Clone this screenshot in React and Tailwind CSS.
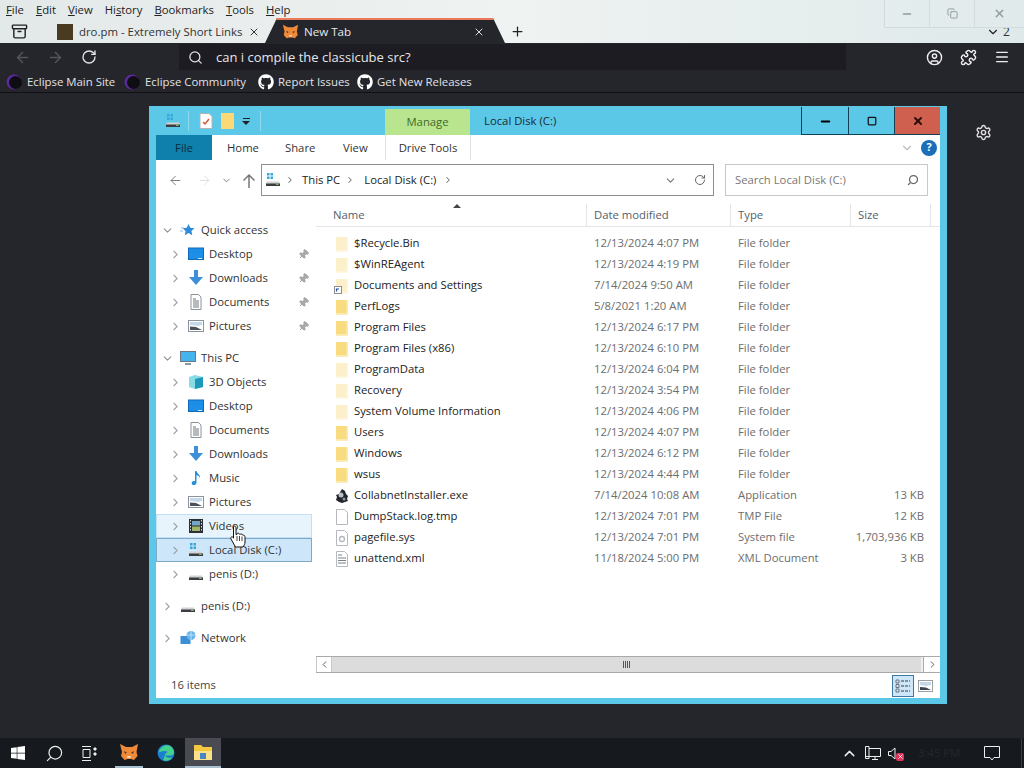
import React from 'react';
import { ArrowLeft, ArrowRight, RotateCw, Search, CircleUser, Puzzle, Menu, Settings, X, Plus, ChevronDown, ChevronRight, ChevronUp, Minus, Pin, Copy, Square, Archive } from 'lucide-react';
import { FaGithub, FaWindows } from 'react-icons/fa';

const quickAccess = [
  ['Desktop', 'desktop'],
  ['Downloads', 'downloads'],
  ['Documents', 'documents'],
  ['Pictures', 'pictures'],
];

const pcItems = [
  ['3D Objects', 'cube'],
  ['Desktop', 'desktop'],
  ['Documents', 'documents'],
  ['Downloads', 'downloads'],
  ['Music', 'music'],
  ['Pictures', 'pictures'],
  ['Videos', 'videos', 'hover'],
  ['Local Disk (C:)', 'drivec', 'selected'],
  ['penis (D:)', 'drive'],
];

const files = [
  ['$Recycle.Bin', '12/13/2024 4:07 PM', 'File folder', '', 'hidden'],
  ['$WinREAgent', '12/13/2024 4:19 PM', 'File folder', '', 'hidden'],
  ['Documents and Settings', '7/14/2024 9:50 AM', 'File folder', '', 'link'],
  ['PerfLogs', '5/8/2021 1:20 AM', 'File folder', '', 'folder'],
  ['Program Files', '12/13/2024 6:17 PM', 'File folder', '', 'folder'],
  ['Program Files (x86)', '12/13/2024 6:10 PM', 'File folder', '', 'folder'],
  ['ProgramData', '12/13/2024 6:04 PM', 'File folder', '', 'hidden'],
  ['Recovery', '12/13/2024 3:54 PM', 'File folder', '', 'hidden'],
  ['System Volume Information', '12/13/2024 4:06 PM', 'File folder', '', 'hidden'],
  ['Users', '12/13/2024 4:07 PM', 'File folder', '', 'folder'],
  ['Windows', '12/13/2024 6:12 PM', 'File folder', '', 'folder'],
  ['wsus', '12/13/2024 4:44 PM', 'File folder', '', 'folder'],
  ['CollabnetInstaller.exe', '7/14/2024 10:08 AM', 'Application', '13 KB', 'exe'],
  ['DumpStack.log.tmp', '12/13/2024 7:01 PM', 'TMP File', '12 KB', 'blank'],
  ['pagefile.sys', '12/13/2024 7:01 PM', 'System file', '1,703,936 KB', 'sys'],
  ['unattend.xml', '11/18/2024 5:00 PM', 'XML Document', '3 KB', 'xml'],
];

const FileIcon = ({ kind }) => {
  if (kind === 'hidden' || kind === 'folder' || kind === 'link') {
    const fill = kind === 'folder' ? '#f9dc80' : '#fbf0c9';
    const pale = kind === 'folder' ? '#fcebb0' : '#fdf6dc';
    return (
      <svg width="16" height="16" viewBox="0 0 16 16">
        <path d="M2 1h12v14.500H2z" fill={fill} />
        <path d="M12.500 1H14v14.500H2V14h10.500z" fill={pale} />
        {kind === 'link' && <rect x="0.500" y="8.500" width="7" height="7" fill="#fff" stroke="#8a8f98" />}
        {kind === 'link' && <path d="M2.500 13.500V11h2.500" fill="none" stroke="#1e4f9c" strokeWidth="1.200" />}
      </svg>
    );
  }
  if (kind === 'exe') {
    return (
      <svg width="16" height="16" viewBox="0 0 16 16">
        <path d="M8 1l3 2 1 3 2 2-1 3 1 2-3 1-3 1-3-1-3-2 1-3-1-2 3-1z" fill="#23262b" />
        <circle cx="7" cy="7" r="2.500" fill="#b8c2cc" />
        <circle cx="10" cy="11" r="1.500" fill="#8d98a3" />
      </svg>
    );
  }
  return (
    <svg width="16" height="16" viewBox="0 0 16 16">
      <path d="M2.500 .500h8l3 3v12h-11z" fill="#fff" stroke="#b5b9bf" />
      {kind === 'sys' && <circle cx="8" cy="9" r="2.500" fill="none" stroke="#b4b8be" strokeWidth="1.300" />}
      {kind === 'xml' && <path d="M4 4h4M4 7h8M4 9.500h8M4 12h8" stroke="#79808a" />}
    </svg>
  );
};

const DriveIcon = ({ win }) => (
  <svg width="16" height="16" viewBox="0 0 16 16">
    {win && <path d="M2 1h2.500v2.500H2zM5.500 1H8v2.500H5.500zM2 4.500h2.500V7H2zM5.500 4.500H8V7H5.500z" fill="#35a7d8" />}
    <path d="M2 9.500h12l1 2v2.500H1v-2.500z" fill="#d2d4d6" />
    <path d="M1 11.500h14V14H1z" fill="#3a3d42" />
    <path d="M11 12.300h2.500" stroke="#9ad16d" />
  </svg>
);

const TreeIcon = ({ kind }) => {
  switch (kind) {
    case 'star':
      return (
        <svg width="16" height="16" viewBox="0 0 16 16">
          <path d="M8.500 2l1.800 3.800 4.200.5-3.100 2.800.9 4.100-3.800-2.100-3.700 2.100.8-4.100-3.100-2.800 4.200-.5z" fill="#2f8ad8" />
          <path d="M1 6h3M0 9h3" stroke="#8fc2ea" />
        </svg>
      );
    case 'desktop':
      return (
        <svg width="16" height="16" viewBox="0 0 16 16">
          <rect x="0.500" y="2" width="15" height="11.500" fill="#1b8fe8" stroke="#1268b5" />
          <path d="M10 12.500h4" stroke="#d6ecff" />
        </svg>
      );
    case 'downloads':
      return (
        <svg width="16" height="16" viewBox="0 0 16 16">
          <path d="M6 0h4v7h5l-7 8-7-8h5z" fill="#3d8fd8" />
        </svg>
      );
    case 'documents':
      return (
        <svg width="16" height="16" viewBox="0 0 16 16">
          <path d="M3 .500h7.500l2.500 2.500v12.500H3z" fill="#fff" stroke="#8c929a" />
          <path d="M5 5h3M5 7h6M5 9h6M5 11h6M5 13h6" stroke="#6d7680" />
        </svg>
      );
    case 'pictures':
      return (
        <svg width="16" height="16" viewBox="0 0 16 16">
          <rect x="0.500" y="2.500" width="15" height="11" fill="#fff" stroke="#8c929a" />
          <path d="M2 4h12v3l-4 1-8-1z" fill="#c5d8e8" />
          <path d="M2 12V8.500l6 .5 6 3z" fill="#4a5158" />
        </svg>
      );
    case 'pc':
      return (
        <svg width="16" height="16" viewBox="0 0 16 16">
          <rect x="0.500" y="1.500" width="15" height="10" fill="#45b4ee" stroke="#6d7680" />
          <path d="M5 14h6" stroke="#6d7680" strokeWidth="1.500" />
        </svg>
      );
    case 'cube':
      return (
        <svg width="16" height="16" viewBox="0 0 16 16">
          <path d="M1 3l6-2 8 2v10l-8 2-6-2z" fill="#8adbe8" />
          <path d="M7 5l8-2v10l-8 2z" fill="#1f97b8" />
        </svg>
      );
    case 'music':
      return (
        <svg width="16" height="16" viewBox="0 0 16 16">
          <path d="M7 1h1.500c.5 3 4 3.500 3.500 7-.6-1.800-2-2.500-3.500-2.800V12.500C8.500 14.500 6.500 15.500 5 15s-1.800-2.500-.5-3.500c.8-.6 1.800-.6 2.500-.2z" fill="#2590de" />
        </svg>
      );
    case 'videos':
      return (
        <svg width="16" height="16" viewBox="0 0 16 16">
          <rect x="1" y="1" width="14" height="14" fill="#2c2f33" />
          <rect x="4" y="3" width="8" height="4.500" fill="#74a6c8" />
          <rect x="4" y="8.500" width="8" height="4.500" fill="#a2b56a" />
          <path d="M2.500 2v12M13.500 2v12" stroke="#d5d8db" strokeDasharray="1.500 1.500" />
        </svg>
      );
    case 'drivec':
      return <DriveIcon win />;
    case 'drive':
      return <DriveIcon />;
    case 'network':
      return (
        <svg width="16" height="16" viewBox="0 0 16 16">
          <rect x="0.500" y="6" width="10" height="8" fill="#3a8fd6" />
          <circle cx="11" cy="5.500" r="4.500" fill="#69b5ea" />
          <path d="M7 5h8M11 1v9" stroke="#d6ecff" strokeWidth="0.700" />
        </svg>
      );
    default:
      return null;
  }
};

const TreeRow = ({ label, icon, indent, pinned, state }) => {
  const bg =
    state === 'selected'
      ? 'bg-[#cde6f9] border-[#7fa9c9]'
      : state === 'hover'
        ? 'bg-[#e8f4fc] border-[#c4dff3]'
        : 'border-transparent';
  return (
    <div className={`flex h-[24px] items-center border ${bg}`}>
      <div className={indent ? 'flex w-[31px] justify-end pr-[6px]' : 'flex w-[23px] justify-end pr-[6px]'}>
        <ChevronRight size={13} strokeWidth={2} className="text-[#9fa3a8]" />
      </div>
      <TreeIcon kind={icon} />
      <span className="ml-[5px] text-[11.3px] text-[#333]">{label}</span>
      {pinned && <Pin size={11} className="ml-auto mr-[2px] rotate-45 fill-[#aaa] text-[#9a9a9a]" />}
    </div>
  );
};

const GroupHead = ({ label, icon }) => (
  <div className="flex h-[24px] items-center border border-transparent">
    <div className="flex w-[23px] justify-end pr-[6px]">
      <ChevronDown size={13} strokeWidth={2} className="text-[#8c9096]" />
    </div>
    <TreeIcon kind={icon} />
    <span className="ml-[5px] text-[11.3px] text-[#333]">{label}</span>
  </div>
);

const TopRow = ({ label, icon }) => (
  <div className="flex h-[24px] items-center border border-transparent">
    <div className="flex w-[23px] justify-end pr-[6px]">
      <ChevronRight size={13} strokeWidth={2} className="text-[#9fa3a8]" />
    </div>
    <TreeIcon kind={icon} />
    <span className="ml-[5px] text-[11.3px] text-[#333]">{label}</span>
  </div>
);

const EclipseIcon = () => (
  <svg width="16" height="16" viewBox="0 0 16 16" className="shrink-0">
    <circle cx="8" cy="8" r="7.500" fill="#5b2a9b" />
    <circle cx="9.500" cy="8.500" r="6.500" fill="#0e0d12" />
  </svg>
);

const FoxIcon = ({ size }) => (
  <svg width={size} height={size} viewBox="0 0 20 20">
    <path d="M1 2l6 3h6l6-3-1.500 8 1 4-3.500 4-3-1H8.500l-3 1L2 14l1-4z" fill="#ef8a3a" />
    <path d="M5 9l3 1.500-2 1.500zM15 9l-3 1.500 2 1.500z" fill="#5a3a22" />
    <path d="M8 14h4l-.5 2h-3z" fill="#f9d6ae" />
  </svg>
);

const ArrowUp = () => (
  <svg width="14" height="15" viewBox="0 0 14 15" fill="none" stroke="#777" strokeWidth="1.500" className="ml-[10px] mt-[9px] shrink-0">
    <path d="M7 15V2M1.500 7.500L7 2l5.500 5.500" />
  </svg>
);

function App() {
  return (
    <div className="relative flex h-[768px] w-[1024px] flex-col overflow-hidden bg-[#25252c] font-['Open_Sans',sans-serif]">
      {/* browser chrome */}
      <div className="h-[43px] bg-gradient-to-r from-[#e3e8e8] via-[#eff3f2] to-[#dfe9ea]">
        <div className="flex h-[20px] items-center gap-[12px] pl-[6px] text-[11.3px] text-[#222]">
          <span><u>F</u>ile</span>
          <span><u>E</u>dit</span>
          <span><u>V</u>iew</span>
          <span>Hi<u>s</u>tory</span>
          <span><u>B</u>ookmarks</span>
          <span><u>T</u>ools</span>
          <span><u>H</u>elp</span>
        </div>
        <div className="flex h-[23px] items-center">
          <Archive size={17} className="ml-[11px] text-[#222]" />
          <div className="ml-[29px] h-[16px] w-[16px] bg-[#4a3a22]" />
          <span className="ml-[6px] w-[163px] whitespace-nowrap text-[11.4px] text-[#333]">dro.pm - Extremely Short Links</span>
          <X size={12} className="ml-[6px] text-[#333]" />
          <div className="ml-[5px] -mt-[2px] flex h-[25px] w-[240px] items-center border-t-2 border-[#e8795a] bg-[#25252c] pl-[17px] pr-[20px] [clip-path:polygon(12px_0,228px_0,240px_100%,0_100%)]">
            <FoxIcon size={17} />
            <span className="ml-[5px] text-[11.6px] text-[#e8e8ea]">New Tab</span>
            <X size={12} className="ml-auto text-[#ddd]" />
          </div>
          <Plus size={15} className="ml-[5px] text-[#222]" />
          <ChevronDown size={14} className="ml-[461px] text-[#222]" />
          <span className="ml-[3px] text-[12px] text-[#333]">2</span>
        </div>
      </div>

      {/* toolbar */}
      <div className="flex h-[28px] items-center">
        <ArrowLeft size={17} className="ml-[14px] text-[#55555c]" />
        <ArrowRight size={17} className="ml-[16px] text-[#55555c]" />
        <RotateCw size={16} className="ml-[17px] text-[#e4e4e6]" />
        <div className="ml-[82px] flex h-[26px] w-[667px] items-center bg-[#1c1c22] pl-[9px]">
          <Search size={15} className="text-[#e6e6e8]" />
          <span className="ml-[13px] mt-[2px] text-[13px] text-[#e6e6e8]">can i compile the classicube src?</span>
        </div>
        <CircleUser size={17} className="ml-[80px] text-[#eee]" />
        <Puzzle size={17} className="ml-[17px] text-[#eee]" />
        <Menu size={16} className="ml-[17px] text-[#eee]" />
      </div>

      {/* bookmarks */}
      <div className="flex h-[22px] items-center border-b border-[#111115] pl-[6px] text-[11.4px] text-[#e2e2e4]">
        <EclipseIcon />
        <span className="ml-[5px] w-[88px] whitespace-nowrap">Eclipse Main Site</span>
        <div className="ml-[9px]"><EclipseIcon /></div>
        <span className="ml-[5px] w-[103px] whitespace-nowrap">Eclipse Community</span>
        <FaGithub size={16} className="ml-[10px] text-white" />
        <span className="ml-[4px] w-[69px] whitespace-nowrap">Report Issues</span>
        <FaGithub size={16} className="ml-[10px] text-white" />
        <span className="ml-[4px] whitespace-nowrap">Get New Releases</span>
      </div>

      {/* page area */}
      <div className="flex flex-1 items-start pl-[149px] pt-[13px]">
        <div className="flex h-[598px] w-[798px] flex-col bg-[#5cc8e8] pb-[6px] pl-[7px] pr-[7px]">
          {/* title bar */}
          <div className="flex h-[29px] items-stretch pt-[1px]">
            <div className="flex w-[229px] items-center pl-[9px]">
              <DriveIcon win />
              <div className="ml-[7px] h-[20px] w-px bg-[#8ed9ee]" />
              <svg width="14" height="16" viewBox="0 0 14 16" className="ml-[10px]">
                <path d="M1 .500h9l3 3v12H1z" fill="#fff" stroke="#b0b4b8" />
                <path d="M4 9l2 2 4-5" fill="none" stroke="#d8553a" strokeWidth="1.500" />
              </svg>
              <div className="ml-[8px] h-[16px] w-[13px] bg-[#fbd977]" />
              <div className="ml-[8px] flex flex-col items-center">
                <div className="h-px w-[7px] bg-[#222]" />
                <div className="mt-[2px] h-0 w-0 border-x-[4px] border-t-[4px] border-x-transparent border-t-[#222]" />
              </div>
              <div className="ml-[10px] h-[20px] w-px bg-[#8ed9ee]" />
            </div>
            <div className="flex h-[26px] w-[85px] items-center justify-center self-end bg-[#b9e58e] pt-[1px] text-[11.3px] text-[#3f6a2d]">Manage</div>
            <span className="ml-[14px] self-center text-[11.3px] text-[#1c2a33]">Local Disk (C:)</span>
            <div className="ml-auto flex h-[28px] border-b border-[#123f55]">
              <div className="flex w-[47px] items-center justify-center border-l border-[#123f55]">
                <Minus size={13} strokeWidth={3.500} className="mt-[2px] text-black" />
              </div>
              <div className="flex w-[46px] items-center justify-center border-l border-[#123f55]">
                <Square size={10} strokeWidth={3} className="text-[#111]" />
              </div>
              <div className="flex w-[46px] items-center justify-center border-l border-[#123f55] bg-[#cf5f4e]">
                <X size={12} strokeWidth={4} className="text-[#2a0c08]" />
              </div>
            </div>
          </div>

          {/* ribbon tabs */}
          <div className="flex h-[25px] items-center bg-white text-[11.3px] text-[#333]">
            <div className="flex h-full w-[56px] items-center justify-center bg-[#0f7fab] pt-[1px] text-[#0b2c3c]">File</div>
            <span className="ml-[15px] w-[31px] pt-[1px]">Home</span>
            <span className="ml-[27px] w-[31px] pt-[1px]">Share</span>
            <span className="ml-[27px] w-[24px] pt-[1px]">View</span>
            <div className="ml-[18px] flex h-full w-[86px] items-center justify-center border-x border-[#dfe3e6] pt-[1px]">Drive Tools</div>
            <ChevronDown size={14} className="ml-auto text-[#b9bcc0]" />
            <div className="ml-[7px] mr-[3px] flex h-[16px] w-[16px] items-center justify-center rounded-full bg-[#1a6fb8] text-[11px] font-bold text-white">?</div>
          </div>

          {/* address row */}
          <div className="flex h-[41px] items-start bg-white pt-[4px]">
            <ArrowLeft size={15} strokeWidth={1.500} className="ml-[12px] mt-[9px] text-[#777]" />
            <ArrowRight size={15} strokeWidth={1.500} className="ml-[14px] mt-[9px] text-[#ddd]" />
            <ChevronDown size={11} strokeWidth={2} className="ml-[9px] mt-[11px] text-[#777]" />
            <ArrowUp />
            <div className="ml-[5px] flex h-[32px] w-[453px] items-center border border-[#8b8f94] pl-[3px] text-[11.3px] text-[#222]">
              <DriveIcon win />
              <ChevronRight size={10} strokeWidth={2.500} className="ml-[4px] text-[#777]" />
              <span className="ml-[7px]">This PC</span>
              <ChevronRight size={10} strokeWidth={2.500} className="ml-[5px] text-[#777]" />
              <span className="ml-[9px]">Local Disk (C:)</span>
              <ChevronRight size={10} strokeWidth={2.500} className="ml-[7px] text-[#777]" />
              <ChevronDown size={13} className="ml-auto text-[#777]" />
              <RotateCw size={12} className="ml-[17px] mr-[7px] text-[#666]" />
            </div>
            <div className="ml-[11px] flex h-[32px] w-[203px] items-center border border-[#c6c9cc] pl-[9px] pr-[8px] text-[11.3px] text-[#777]">
              Search Local Disk (C:)
              <Search size={12} strokeWidth={2.500} className="ml-auto -scale-x-100 text-[#666]" />
            </div>
          </div>

          {/* tree and list */}
          <div className="flex flex-1 bg-white">
            <div className="w-[156px] shrink-0 pt-[17px]">
              <GroupHead label="Quick access" icon="star" />
              {quickAccess.map(([label, icon]) => (
                <TreeRow key={label} label={label} icon={icon} indent pinned />
              ))}
              <div className="h-[8px]" />
              <GroupHead label="This PC" icon="pc" />
              {pcItems.map(([label, icon, state]) => (
                <TreeRow key={label} label={label} icon={icon} indent state={state} />
              ))}
              <div className="h-[8px]" />
              <TopRow label="penis (D:)" icon="drive" />
              <div className="h-[8px]" />
              <TopRow label="Network" icon="network" />
            </div>

            <div className="relative ml-[4px] flex min-w-0 flex-1 flex-col pt-[3px]">
              <div className="grid h-[23px] grid-cols-[271px_144px_120px_80px] border-b border-[#e5e5e5] text-[11.3px] text-[#55606b]">
                <div className="flex items-center border-r border-[#e5e5e5] pl-[17px]">Name</div>
                <div className="flex items-center border-r border-[#e5e5e5] pl-[7px]">Date modified</div>
                <div className="flex items-center border-r border-[#e5e5e5] pl-[7px]">Type</div>
                <div className="flex items-center border-r border-[#e5e5e5] pl-[7px]">Size</div>
              </div>
              <div className="absolute left-[137px] top-[3px] h-0 w-0 border-x-[4px] border-b-[4px] border-x-transparent border-b-[#444]" />
              <div className="flex-1 pt-[6px]">
                {files.map(([name, date, type, size, kind]) => (
                  <div key={name} className="grid h-[21px] grid-cols-[271px_144px_120px_80px] items-center text-[11.3px]">
                    <div className="flex items-center pl-[18px] text-[#222]">
                      <FileIcon kind={kind} />
                      <span className="ml-[4px]">{name}</span>
                    </div>
                    <span className="pl-[7px] text-[#6d6d6d]">{date}</span>
                    <span className="pl-[7px] text-[#6d6d6d]">{type}</span>
                    <span className="pr-[7px] text-right text-[#6d6d6d]">{size}</span>
                  </div>
                ))}
              </div>

              {/* horizontal scrollbar */}
              <div className="flex h-[17px] items-stretch border-y border-[#a9a9a9] bg-[#f0f0f0]">
                <div className="flex w-[16px] items-center justify-center border-x border-[#c9c9c9] bg-white">
                  <ChevronRight size={11} strokeWidth={2} className="rotate-180 text-[#555]" />
                </div>
                <div className="flex w-[589px] items-center justify-center bg-[#dcdcdc]">
                  <div className="h-[7px] w-[7px] bg-[repeating-linear-gradient(90deg,#555_0,#555_1px,transparent_1px,transparent_2px)]" />
                </div>
                <div className="ml-auto flex w-[17px] items-center justify-center border-l border-[#a9a9a9] bg-white">
                  <ChevronRight size={11} strokeWidth={2} className="text-[#555]" />
                </div>
              </div>
            </div>
          </div>

          {/* status bar */}
          <div className="flex h-[25px] items-center bg-white pl-[15px] text-[11.3px] text-[#444]">
            16 items
            <div className="ml-auto flex h-[22px] w-[22px] items-center justify-center border border-[#3e7a9e] bg-[#cde6f9]">
              <svg width="16" height="14" viewBox="0 0 16 14">
                <path d="M1 1h3v3H1zM1 5.500h3v3H1zM1 10h3v3H1z" fill="none" stroke="#6a7580" />
                <path d="M6 2h9M6 7h9M6 12h9" stroke="#6a7580" strokeWidth="1.300" strokeDasharray="3 1" />
              </svg>
            </div>
            <div className="ml-[4px] mr-[7px]">
              <svg width="15" height="12" viewBox="0 0 15 12" className="block">
                <rect x="0.500" y="0.500" width="14" height="11" fill="#fff" stroke="#9aa0a6" />
                <path d="M2 2h11v3l-5 1-6-1z" fill="#c5d8e8" />
                <path d="M2 10V7l6 .5 5 2.500z" fill="#3e454c" />
              </svg>
            </div>
          </div>
        </div>
        <Settings size={17} className="ml-[28px] mt-[18px] text-[#e0e0e2]" />
      </div>

      {/* taskbar */}
      <div className="flex h-[30px] items-stretch bg-[#161a1e]">
        <div className="flex w-[36px] items-center justify-center">
          <FaWindows size={16} className="text-white" />
        </div>
        <div className="flex w-[36px] items-center justify-center">
          <Search size={19} strokeWidth={1.500} className="-scale-x-100 text-[#eee]" />
        </div>
        <div className="flex w-[36px] items-center justify-center">
          <svg width="18" height="15" viewBox="0 0 18 15" fill="none" stroke="#eee">
            <path d="M1 .500h9M1 14.500h9M2 3.500h7v8H2z" />
            <path d="M13 2h2v2h-2zM13 7h2v2h-2z" fill="#eee" />
          </svg>
        </div>
        <div className="ml-[7px] flex w-[28px] items-center justify-center border-b-2 border-[#a8c0d0]">
          <FoxIcon size={20} />
        </div>
        <div className="ml-[9px] flex w-[28px] items-center justify-center">
          <svg width="18" height="18" viewBox="0 0 18 18">
            <circle cx="9" cy="9" r="8.500" fill="#1a7fcf" />
            <path d="M2 8C3 3 8 .500 12 1.500c3 1 5 4 5 7 0 2-2 3-4 3H8c1 2 4 3 7 2-2 3.500-6 4-9 2.500 2-3 1-7 5-8-3-2-7-1-9 .500z" fill="#45d08e" />
          </svg>
        </div>
        <div className="ml-[5px] flex w-[36px] items-center justify-center border-b-2 border-[#a8c0d0] bg-[#4a4a52]">
          <svg width="20" height="18" viewBox="0 0 20 18">
            <path d="M1 2h7l2 2h9v13H1z" fill="#f5c93f" />
            <path d="M1 8h18v9H1z" fill="#fbe28a" />
            <rect x="7" y="10" width="6" height="6" fill="#4a86c5" />
          </svg>
        </div>
        <ChevronUp size={17} className="ml-[620px] self-center text-[#eee]" />
        <svg width="16" height="15" viewBox="0 0 16 15" fill="none" stroke="#eee" className="ml-[7px] self-center">
          <path d="M4 2.500h11.500v8H1M7 13.500h6M10 10.500v3M.500 .500h3.500v12H.500z" />
        </svg>
        <div className="relative ml-[7px] w-[15px] self-center">
          <svg width="11" height="13" viewBox="0 0 11 13" fill="none" stroke="#eee" className="block">
            <path d="M.500 4.500h2.500l4-3.500v11l-4-3.500H.500z" />
          </svg>
          <div className="absolute -right-[1px] top-[6px] flex h-[8px] w-[8px] items-center justify-center rounded-[2px] bg-[#e0325a]">
            <X size={7} strokeWidth={3} className="text-white" />
          </div>
        </div>
        <span className="ml-[15px] self-center text-[11.3px] text-[#24272c]">3:45 PM</span>
        <svg width="16" height="15" viewBox="0 0 16 15" fill="none" stroke="#eee" className="ml-[24px] self-center">
          <path d="M.500 .500h15v11H10l-2 2.500-2-2.500H.500z" />
        </svg>
        <div className="ml-[21px] w-px self-stretch bg-[#3a3d42]" />
      </div>

      {/* chrome window buttons, drawn over the menu bar */}
      <div className="absolute right-0 top-0 flex h-[28px] text-[#8e9a9c]">
        <div className="flex w-[46px] items-center justify-center border-x border-b border-[#d2dcdc] bg-white/5">
          <Minus size={12} strokeWidth={3} />
        </div>
        <div className="flex w-[45px] items-center justify-center border-r border-b border-[#d2dcdc] bg-white/5">
          <Copy size={11} strokeWidth={2} />
        </div>
        <div className="flex w-[49px] items-center justify-center border-b border-[#d2dcdc] bg-white/5">
          <X size={13} strokeWidth={2.500} />
        </div>
      </div>

      {/* mouse cursor */}
      <svg width="18" height="24" viewBox="0 0 17 24" className="absolute left-[229px] top-[525px]">
        <path d="M4 1.500c1.200-1 2.500 0 2.500 1.200v7l1-.3V8.500c1-.8 2-.2 2.200.6l1 .2c.8-.6 2-.2 2.200.6l.8.2c1.200 0 1.800 1 1.800 2V17c0 2-1 3.500-2 5H6l-4-7c-1-1.500-1-2.500 0-3 1-.5 2 .3 2 1.200z" fill="#fff" stroke="#111" strokeWidth="1" />
        <path d="M7.500 11v5M10 11v5M12.500 11.500v4.500" stroke="#111" strokeWidth="0.800" />
      </svg>
    </div>
  );
}

export default App;
